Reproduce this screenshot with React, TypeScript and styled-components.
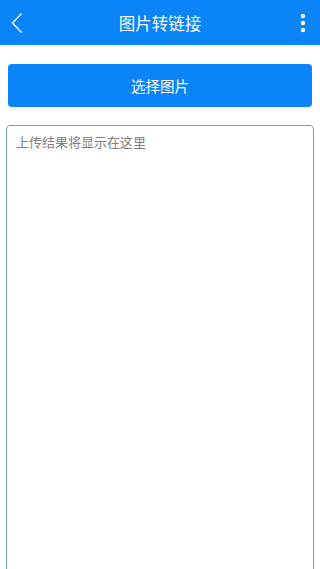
import React from 'react';
import styled, { createGlobalStyle } from 'styled-components';

const GlobalStyle = createGlobalStyle`
  html, body {
    margin: 0;
    padding: 0;
    height: 100%;
    background: #fff;
    overflow: hidden;
  }
  #root {
    height: 100%;
  }
  * {
    box-sizing: border-box;
  }
`;

const Page = styled.div`
  height: 100%;
  display: flex;
  flex-direction: column;
  font-family: 'Noto Sans CJK SC', 'Noto Sans', sans-serif;
`;

const Header = styled.header`
  height: 45px;
  flex-shrink: 0;
  background: #0a84f7;
  display: grid;
  grid-template-columns: 45px 1fr 45px;
  align-items: center;
`;

const IconButton = styled.button<{ $side: 'left' | 'right' }>`
  height: 45px;
  border: 0;
  background: transparent;
  padding: 0;
  display: flex;
  align-items: center;
  justify-content: ${(p) => (p.$side === 'left' ? 'flex-start' : 'flex-end')};
  padding-left: ${(p) => (p.$side === 'left' ? '10px' : '0')};
  padding-right: ${(p) => (p.$side === 'right' ? '14px' : '0')};
`;

const Title = styled.h1`
  margin: 0;
  text-align: center;
  color: #fff;
  font-size: 16.5px;
  font-weight: 400;
`;

const Body = styled.main`
  flex: 1;
  display: flex;
  flex-direction: column;
  padding: 19px 6px 0;
  gap: 18px;
  min-height: 0;
`;

const PickButton = styled.button`
  margin: 0 2px;
  height: 43px;
  border: 0;
  border-radius: 4px;
  background: #0a84f7;
  color: #fff;
  font-family: inherit;
  font-size: 14.5px;
`;

const ResultBox = styled.textarea`
  flex: 1;
  margin-bottom: -10px;
  border: 1px solid #6fa3a8;
  border-radius: 4px;
  padding: 7px 9px;
  font-family: inherit;
  font-size: 13px;
  line-height: 18px;
  color: #333;
  resize: none;
  outline: none;

  &::placeholder {
    color: #808080;
  }
`;

function BackIcon() {
  return (
    <svg width="14" height="22" viewBox="0 0 14 22">
      <path d="M11.5 1.5 L2.5 11 L11.5 20.5" fill="none" stroke="#fff" strokeWidth="1.3" />
    </svg>
  );
}

function MoreIcon() {
  return (
    <svg width="6" height="20" viewBox="0 0 6 20">
      <circle cx="3" cy="3" r="2.2" fill="#fff" />
      <circle cx="3" cy="10" r="2.2" fill="#fff" />
      <circle cx="3" cy="17" r="2.2" fill="#fff" />
    </svg>
  );
}

export default function App() {
  return (
    <Page>
      <GlobalStyle />
      <Header>
        <IconButton $side="left">
          <BackIcon />
        </IconButton>
        <Title>图片转链接</Title>
        <IconButton $side="right">
          <MoreIcon />
        </IconButton>
      </Header>
      <Body>
        <PickButton>选择图片</PickButton>
        <ResultBox placeholder="上传结果将显示在这里" />
      </Body>
    </Page>
  );
}
